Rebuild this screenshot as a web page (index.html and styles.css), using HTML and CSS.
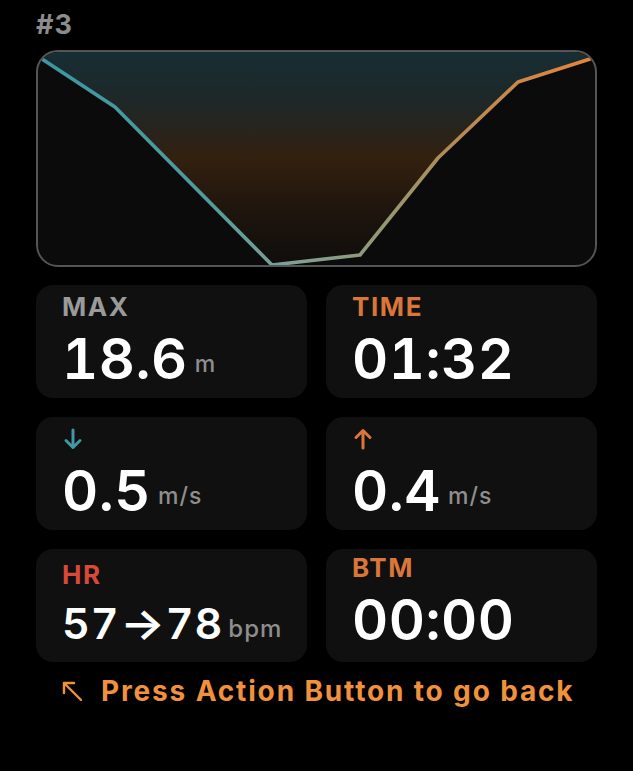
FILE: index.html
```html
<!DOCTYPE html>
<html>
<head>
<meta charset="utf-8">
<link rel="stylesheet" href="styles.css">
</head>
<body>
<div class="screen">
  <div class="title">#3</div>
  <div class="chart">
    <svg class="chart-svg" viewBox="0 0 557 213" preserveAspectRatio="none">
      <defs>
        <linearGradient id="fillg" x1="0" y1="0" x2="0" y2="1">
          <stop offset="0" stop-color="#162e34"/>
          <stop offset="0.25" stop-color="#1f2727"/>
          <stop offset="0.5" stop-color="#33200f"/>
          <stop offset="0.75" stop-color="#1e150d"/>
          <stop offset="1" stop-color="#0f0d0c"/>
        </linearGradient>
        <linearGradient id="lineg" x1="0" y1="0" x2="557" y2="0" gradientUnits="userSpaceOnUse">
          <stop offset="0" stop-color="#3b97a3"/>
          <stop offset="0.3" stop-color="#4f9ba0"/>
          <stop offset="0.45" stop-color="#80a095"/>
          <stop offset="0.6" stop-color="#8f9a78"/>
          <stop offset="0.75" stop-color="#b48a55"/>
          <stop offset="1" stop-color="#e8843a"/>
        </linearGradient>
      </defs>
      <polygon points="4,7 77,55 234,213 322,203 400,106 480,30 552,7 557,0 0,0" fill="url(#fillg)"/>
      <polyline points="4,7 77,55 234,213 322,203 400,106 480,30 552,7" fill="none" stroke="url(#lineg)" stroke-width="3.6" stroke-linejoin="round" stroke-linecap="round"/>
    </svg>
  </div>
  <div class="grid">
    <div class="card">
      <div class="label gray">MAX</div>
      <div class="value"><span class="num">18.6</span><span class="unit">m</span></div>
    </div>
    <div class="card">
      <div class="label orange">TIME</div>
      <div class="value"><span class="num">01:32</span></div>
    </div>
    <div class="card">
      <div class="label icon">
        <svg class="arrow" viewBox="0 0 20 22"><path d="M10 2 V19 M3 12.5 L10 19.5 L17 12.5" fill="none" stroke="#3f98a4" stroke-width="3" stroke-linecap="round" stroke-linejoin="round"/></svg>
      </div>
      <div class="value"><span class="num">0.5</span><span class="unit">m/s</span></div>
    </div>
    <div class="card">
      <div class="label icon">
        <svg class="arrow" viewBox="0 0 20 22"><path d="M10 20 V3 M3 9.5 L10 2.5 L17 9.5" fill="none" stroke="#d9773a" stroke-width="3" stroke-linecap="round" stroke-linejoin="round"/></svg>
      </div>
      <div class="value"><span class="num">0.4</span><span class="unit">m/s</span></div>
    </div>
    <div class="card">
      <div class="label red">HR</div>
      <div class="value small"><span class="num">57<span class="hr-arrow">→</span>78</span><span class="unit">bpm</span></div>
    </div>
    <div class="card up">
      <div class="label orange">BTM</div>
      <div class="value"><span class="num">00:00</span></div>
    </div>
  </div>
  <div class="footer">
    <svg class="back" viewBox="0 0 22 22"><path d="M20 20 L3 3 M3 13 V3 H13" fill="none" stroke="#f0913e" stroke-width="2.4" stroke-linecap="round" stroke-linejoin="round"/></svg>
    <span class="hint">Press Action Button to go back</span>
  </div>
</div>
</body>
</html>
```
FILE: styles.css
```css
html, body {
  margin: 0;
  padding: 0;
  background: #000;
}
body {
  font-family: Inter, "Noto Sans", sans-serif;
  color: #fff;
}
.screen {
  width: 633px;
  height: 771px;
  box-sizing: border-box;
  padding: 9px 36px 0 36px;
}
.title {
  font-size: 27px;
  font-weight: 700;
  color: #8c8c8c;
  line-height: 32px;
  height: 41px;
  letter-spacing: 1px;
}
.chart {
  height: 217px;
  box-sizing: border-box;
  border: 2px solid #555;
  border-radius: 22px;
  background: #0b0b0b;
  overflow: hidden;
}
.chart-svg {
  display: block;
  width: 557px;
  height: 213px;
}
.grid {
  margin-top: 18px;
  display: grid;
  grid-template-columns: 271px 271px;
  grid-auto-rows: 113px;
  column-gap: 19px;
  row-gap: 19px;
}
.card {
  background: #101010;
  border-radius: 17px;
  display: flex;
  flex-direction: column;
  justify-content: center;
  padding: 0 26px 4px 26px;
}
.card.up {
  padding-bottom: 10px;
}
.label {
  font-size: 26px;
  font-weight: 700;
  line-height: 30px;
  height: 30px;
  letter-spacing: 1.6px;
}
.label.icon {
  display: flex;
  align-items: center;
  height: 30px;
}
.arrow {
  width: 20px;
  height: 22px;
  margin-left: 1px;
}
.gray { color: #9a9a9a; }
.orange { color: #d9773a; }
.red { color: #d8493a; }
.value {
  display: flex;
  align-items: baseline;
  margin-top: 8px;
  white-space: nowrap;
}
.num {
  font-size: 56px;
  font-weight: 600;
  line-height: 58px;
  letter-spacing: 0.5px;
  font-variant-numeric: tabular-nums;
}
.unit {
  font-size: 23px;
  font-weight: 500;
  color: #8e8e8e;
  margin-left: 7px;
  letter-spacing: 1px;
  transform: translateY(-7px);
}
.value.small {
  margin-top: 9px;
}
.value.small .num {
  font-size: 43px;
  line-height: 48px;
  letter-spacing: 1px;
}
.hr-arrow {
  display: inline-block;
  margin: 0 2px;
  transform: scaleX(1.1);
}
.value.small .unit {
  font-size: 24px;
  margin-left: 5px;
  transform: translateY(-2px);
}
.footer {
  margin-top: 14px;
  display: flex;
  align-items: center;
  padding-left: 25px;
  height: 30px;
}
.back {
  width: 22px;
  height: 22px;
  margin-right: 18px;
}
.hint {
  color: #f0913e;
  font-size: 28px;
  font-weight: 700;
  letter-spacing: 1.85px;
}
```
